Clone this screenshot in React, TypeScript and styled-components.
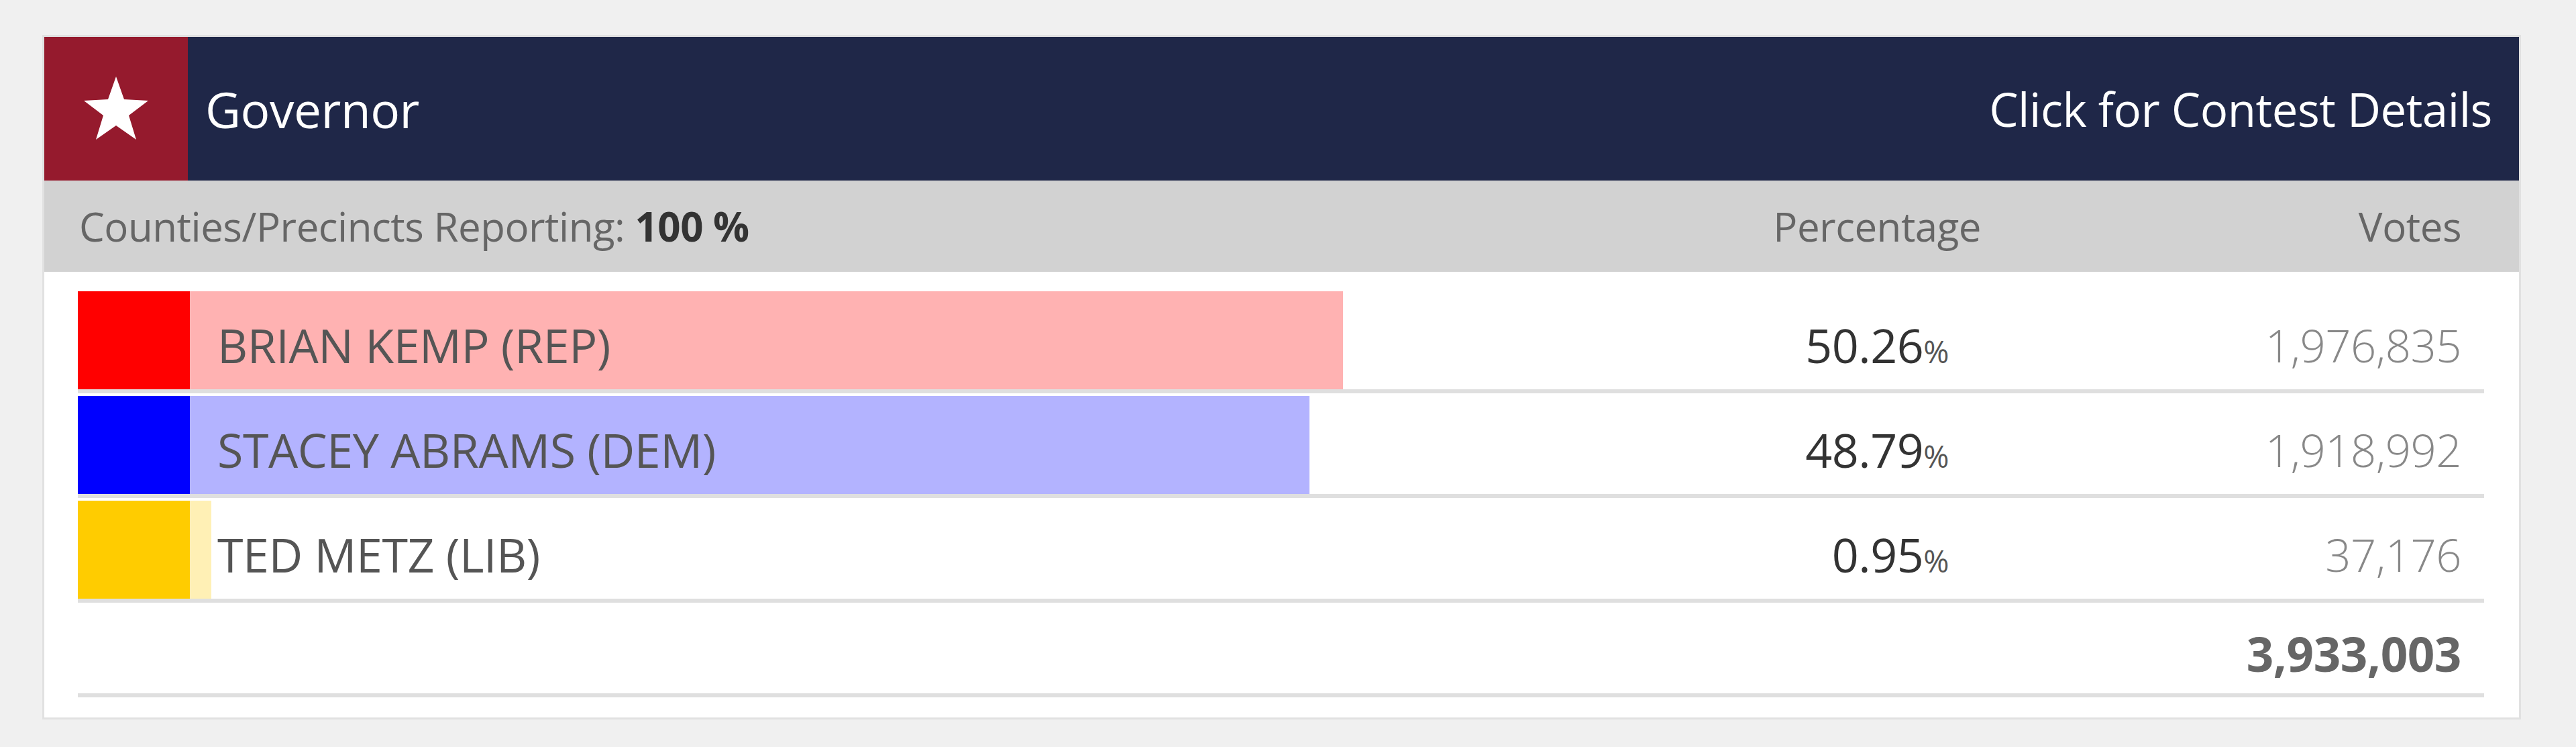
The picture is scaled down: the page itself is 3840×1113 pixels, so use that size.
import styled, { createGlobalStyle } from "styled-components";

const GlobalStyle = createGlobalStyle`
  body {
    margin: 0;
    background: #f0f0f0;
    font-family: "Open Sans", "Noto Sans", "Liberation Sans", sans-serif;
    letter-spacing: -0.03em;
  }
`;

const Page = styled.div`
  padding: 52px 82px 0 63px;
`;

const Card = styled.div`
  background: #fff;
  border: 3px solid #e1e1e1;
  padding-bottom: 30px;
`;

const Header = styled.div`
  display: flex;
  align-items: center;
  height: 214px;
  background: #1f2748;
  color: #fff;
`;

const StarBox = styled.div`
  width: 214px;
  height: 100%;
  background: #951a2d;
  display: flex;
  align-items: center;
  justify-content: center;
`;

const Title = styled.div`
  flex: 1;
  margin-left: 26px;
  font-size: 73px;
`;

const DetailsLink = styled.a`
  padding-right: 40px;
  font-size: 69px;
  color: #fff;
  text-decoration: none;
  cursor: pointer;
`;

const SubHeader = styled.div`
  display: grid;
  grid-template-columns: 1fr auto 802px;
  align-items: center;
  height: 136px;
  padding-left: 52px;
  background: #d2d2d2;
  color: #666;
  font-size: 60px;
`;

const Reporting = styled.div`
  b {
    color: #333;
  }
`;

const ColLabel = styled.div<{ $pad?: number }>`
  text-align: right;
  padding-right: ${(p) => p.$pad ?? 0}px;
`;

const Body = styled.div`
  padding: 29px 52px 0 50px;
`;

const Row = styled.div`
  display: flex;
  height: 146px;
  border-bottom: 6px solid #dfdfdf;
  margin-bottom: 4px;
`;

const Swatch = styled.div<{ $color: string }>`
  width: 167px;
  background: ${(p) => p.$color};
`;

const BarArea = styled.div`
  flex: 1;
  position: relative;
  display: grid;
  grid-template-columns: 1fr 400px 798px;
  align-items: center;
  padding-top: 14px;
`;

const Fill = styled.div<{ $color: string }>`
  position: absolute;
  left: 0;
  top: 0;
  bottom: 0;
  background: ${(p) => p.$color};
`;

const Name = styled.div`
  position: relative;
  padding-left: 41px;
  font-size: 70px;
  color: #555;
`;

const Pct = styled.div`
  position: relative;
  text-align: right;
  font-size: 70px;
  color: #333;

  small {
    font-size: 0.66em;
    color: #555;
  }
`;

const Votes = styled.div`
  position: relative;
  text-align: right;
  padding-right: 34px;
  font-size: 67px;
  font-weight: 300;
  color: #888;
`;

const TotalRow = styled.div`
  display: flex;
  align-items: center;
  justify-content: flex-end;
  height: 137px;
  padding: 12px 34px 0 0;
  box-sizing: border-box;
  border-bottom: 6px solid #dfdfdf;
  font-size: 71px;
  font-weight: 700;
  color: #666;
`;

const candidates = [
  { name: "BRIAN KEMP (REP)", color: "#ff0000", light: "#ffb2b2", pct: 50.26, votes: "1,976,835" },
  { name: "STACEY ABRAMS (DEM)", color: "#0000ff", light: "#b3b3ff", pct: 48.79, votes: "1,918,992" },
  { name: "TED METZ (LIB)", color: "#ffcc00", light: "#fff0b5", pct: 0.95, votes: "37,176" },
];

const Star = () => (
  <svg width="100" height="100" viewBox="0 0 100 100">
    <polygon
      fill="#fff"
      points="50,2 62,36 98,38 69,60 80,96 50,75 20,96 31,60 2,38 38,36"
    />
  </svg>
);

export default function App() {
  return (
    <Page>
      <GlobalStyle />
      <Card>
        <Header>
          <StarBox>
            <Star />
          </StarBox>
          <Title>Governor</Title>
          <DetailsLink>Click for Contest Details</DetailsLink>
        </Header>
        <SubHeader>
          <Reporting>
            Counties/Precincts Reporting: <b>100 %</b>
          </Reporting>
          <ColLabel>Percentage</ColLabel>
          <ColLabel $pad={86}>Votes</ColLabel>
        </SubHeader>
        <Body>
          {candidates.map((c) => (
            <Row key={c.name}>
              <Swatch $color={c.color} />
              <BarArea>
                <Fill $color={c.light} style={{ width: `${c.pct}%` }} />
                <Name>{c.name}</Name>
                <Pct>
                  {c.pct.toFixed(2)}
                  <small>%</small>
                </Pct>
                <Votes>{c.votes}</Votes>
              </BarArea>
            </Row>
          ))}
          <TotalRow>3,933,003</TotalRow>
        </Body>
      </Card>
    </Page>
  );
}
